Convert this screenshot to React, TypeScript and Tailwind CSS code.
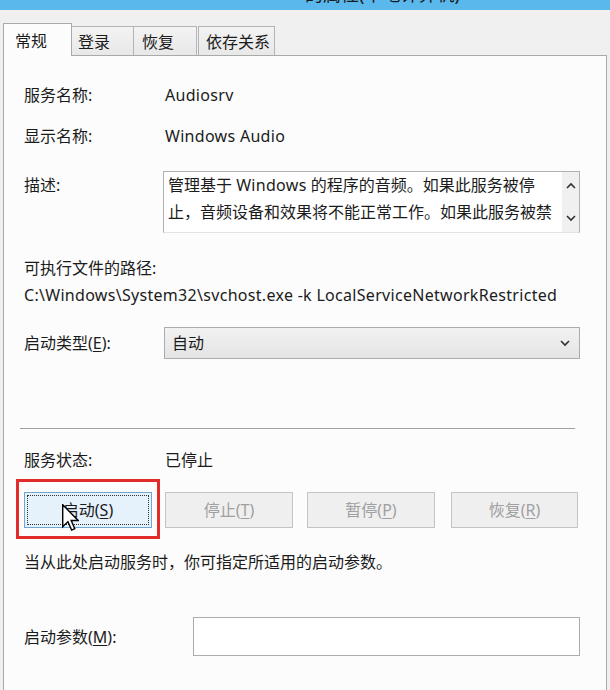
import React from 'react';

const Key = ({ k }: { k: string }) => <span className="underline underline-offset-2">{k}</span>;

const Chevron = ({ up = false }: { up?: boolean }) => (
  <svg width="10" height="7" viewBox="0 0 10 7" className="block">
    <path
      d={up ? 'M1 6 L5 2 L9 6' : 'M1 1 L5 5 L9 1'}
      fill="none"
      stroke="#303030"
      strokeWidth="1.6"
    />
  </svg>
);

const Cursor = () => (
  <svg width="17" height="27" viewBox="0 0 12 19" className="absolute left-[38px] top-[12px]">
    <path d="M0.5 0.5 L0.5 16 L4.2 12.4 L6.8 18.4 L9 17.4 L6.5 11.6 L11.4 11.6 Z" fill="#fff" stroke="#000" strokeWidth="1" strokeLinejoin="miter" />
  </svg>
);

const DisabledButton = ({ label, k, className }: { label: string; k: string; className: string }) => (
  <div
    className={`h-[36px] flex items-center justify-center bg-[#efefef] border border-[#c4c4c4] text-[#a0a0a0] ${className}`}
  >
    {label}(<Key k={k} />)
  </div>
);

export default function App() {
  const rows = [
    { label: '服务名称:', value: 'Audiosrv' },
    { label: '显示名称:', value: 'Windows Audio' },
  ];

  return (
    <div className="w-[610px] h-[690px] overflow-hidden bg-[#f0f0f0] text-[16px] text-[#1b1b1b] font-['Noto_Sans','Noto_Sans_CJK_SC',sans-serif]">
      {/* title bar, only the bottom edge is in view */}
      <div className="h-[10px] bg-[#5ab8ec] overflow-hidden">
        <div className="pl-[305px] -mt-[16px] text-[18px] leading-[20px] text-[#1a1a1a] whitespace-nowrap">
          的属性(本地计算机)
        </div>
      </div>

      {/* tabs */}
      <div className="h-[45px] flex items-end pl-[3px]">
        <div className="relative z-10 w-[69px] h-[33px] -mb-[1px] pl-[11px] pt-[5px] leading-[24px] bg-[#fcfcfc] border-t border-l border-r border-[#a9a9a9]">
          常规
        </div>
        <div className="w-[62px] h-[29px] pl-[6px] pt-[3px] leading-[24px] bg-gradient-to-b from-[#f3f3f3] to-[#e8e8e8] border-t border-r border-[#b4b4b4]">
          登录
        </div>
        <div className="w-[63px] h-[29px] pl-[8px] pt-[3px] leading-[24px] bg-gradient-to-b from-[#f3f3f3] to-[#e8e8e8] border-t border-r border-[#b4b4b4]">
          恢复
        </div>
        <div className="ml-[1px] w-[77px] h-[29px] pl-[7px] pt-[3px] leading-[24px] bg-gradient-to-b from-[#f3f3f3] to-[#e8e8e8] border-t border-l border-r border-[#b4b4b4]">
          依存关系
        </div>
      </div>

      {/* panel */}
      <div className="mx-[3px] h-[635px] bg-[#fcfcfc] border-t border-l border-r border-[#a9a9a9] pl-[20px]">
        <div className="h-[27px]" />
        {rows.map((r, i) => (
          <div key={r.label} className={`flex h-[24px] leading-[24px] ${i === 1 ? 'mt-[17px]' : ''}`}>
            <div className="w-[141px]">{r.label}</div>
            <div className="tracking-[0.3px]">{r.value}</div>
          </div>
        ))}

        {/* description */}
        <div className="flex mt-[23px]">
          <div className="w-[139px] mt-[2px] leading-[24px]">描述:</div>
          <div className="w-[417px] h-[62px] flex bg-white border border-[#b0b0b0] border-b-[#e3e3e3]">
            <div className="flex-1 pl-[4px] leading-[27px] whitespace-nowrap overflow-hidden">
              <div>
                管理基于 <span className="tracking-[0.3px]">Windows</span> 的程序的音频。如果此服务被停
              </div>
              <div>止，音频设备和效果将不能正常工作。如果此服务被禁</div>
            </div>
            <div className="w-[17px] bg-[#f0f0f0] flex flex-col items-center justify-between py-[10px]">
              <Chevron up />
              <Chevron />
            </div>
          </div>
        </div>

        {/* executable path */}
        <div className="mt-[23px] h-[24px] leading-[24px]">可执行文件的路径:</div>
        <div className="mt-[3px] h-[24px] leading-[24px] whitespace-nowrap tracking-[0.3px]">
          {'C:\\Windows\\System32\\svchost.exe -k LocalServiceNetworkRestricted'}
        </div>

        {/* startup type */}
        <div className="flex items-center mt-[20px]">
          <div className="w-[140px]">
            启动类型(<Key k="E" />):
          </div>
          <div className="w-[416px] h-[32px] flex items-center justify-between pl-[7px] pr-[9px] bg-gradient-to-b from-[#f2f2f2] to-[#e4e4e4] border border-[#acacac]">
            <span>自动</span>
            <Chevron />
          </div>
        </div>

        <div className="mt-[69px] -ml-[4px] w-[555px] h-px bg-[#a0a0a0]" />

        {/* status */}
        <div className="flex mt-[19px] h-[24px] leading-[24px]">
          <div className="w-[141px]">服务状态:</div>
          <div>已停止</div>
        </div>

        {/* buttons */}
        <div className="flex mt-[20px]">
          <div className="relative w-[128px] h-[36px]">
            <div className="h-full flex items-center justify-center bg-[#e5f1fb] border border-[#6ea6d8]">
              <div className="absolute inset-[3px] border border-dotted border-[#303030]" />
              启动(<Key k="S" />)
            </div>
            <div className="absolute -left-[8px] -right-[8px] -top-[13px] -bottom-[11px] border-[3px] border-[#e22b2b] pointer-events-none" />
            <Cursor />
          </div>
          <DisabledButton label="停止" k="T" className="ml-[13px] w-[128px]" />
          <DisabledButton label="暂停" k="P" className="ml-[14px] w-[128px]" />
          <DisabledButton label="恢复" k="R" className="ml-[16px] w-[127px]" />
        </div>

        <div className="mt-[22px] h-[24px] leading-[24px]">当从此处启动服务时，你可指定所适用的启动参数。</div>

        {/* start parameters */}
        <div className="flex items-center mt-[43px]">
          <div className="w-[169px]">
            启动参数(<Key k="M" />):
          </div>
          <div className="w-[387px] h-[39px] bg-white border border-[#acacac]" />
        </div>
      </div>
    </div>
  );
}
